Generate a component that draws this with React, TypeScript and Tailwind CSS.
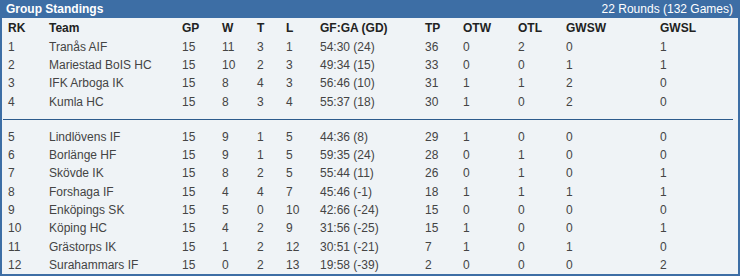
import React from 'react';

type Row = (string | number)[];

const top: Row[] = [
  [1, 'Tranås AIF', 15, 11, 3, 1, '54:30 (24)', 36, 0, 2, 0, 1],
  [2, 'Mariestad BoIS HC', 15, 10, 2, 3, '49:34 (15)', 33, 0, 0, 1, 1],
  [3, 'IFK Arboga IK', 15, 8, 4, 3, '56:46 (10)', 31, 1, 1, 2, 0],
  [4, 'Kumla HC', 15, 8, 3, 4, '55:37 (18)', 30, 1, 0, 2, 0],
];

const bottom: Row[] = [
  [5, 'Lindlövens IF', 15, 9, 1, 5, '44:36 (8)', 29, 1, 0, 0, 0],
  [6, 'Borlänge HF', 15, 9, 1, 5, '59:35 (24)', 28, 0, 1, 0, 0],
  [7, 'Skövde IK', 15, 8, 2, 5, '55:44 (11)', 26, 0, 1, 0, 1],
  [8, 'Forshaga IF', 15, 4, 4, 7, '45:46 (-1)', 18, 1, 1, 1, 1],
  [9, 'Enköpings SK', 15, 5, 0, 10, '42:66 (-24)', 15, 0, 0, 0, 0],
  [10, 'Köping HC', 15, 4, 2, 9, '31:56 (-25)', 15, 1, 0, 0, 1],
  [11, 'Grästorps IK', 15, 1, 2, 12, '30:51 (-21)', 7, 1, 0, 1, 0],
  [12, 'Surahammars IF', 15, 0, 2, 13, '19:58 (-39)', 2, 0, 0, 0, 2],
];

const headers = ['RK', 'Team', 'GP', 'W', 'T', 'L', 'GF:GA (GD)', 'TP', 'OTW', 'OTL', 'GWSW', 'GWSL'];

const cols = 'grid grid-cols-[41px_133px_40px_35px_29px_34px_105px_38px_55px_48px_94px_1fr]';

const TableRow = ({ cells, head }: { cells: Row; head?: boolean }) => (
  <div className={`${cols} items-center ${head ? 'h-[19px] font-bold text-[#222]' : 'h-[18.33px] text-[#444]'}`}>
    {cells.map((c, i) => (
      <div key={i} className="whitespace-nowrap leading-none">{c}</div>
    ))}
  </div>
);

export default function App() {
  return (
    <div className="w-[740px] h-[276px] bg-[#eff3f6] border-2 border-t-0 border-[#3d6ea5] text-[12px] font-['Liberation_Sans',Arial,sans-serif] flex flex-col">
      <div className="h-[18px] bg-[#3d6ea5] text-white flex items-center justify-between px-1 shrink-0">
        <span className="font-bold">Group Standings</span>
        <span className="pr-[1px]">22 Rounds (132 Games)</span>
      </div>
      <div className="pl-[6px] pt-[0.5px]">
        <TableRow cells={headers} head />
        {top.map((r) => (
          <TableRow key={r[0]} cells={r} />
        ))}
      </div>
      <div className="h-[18.33px] flex items-center pl-[1px] pr-[5px]">
        <div className="h-px w-full bg-[#2d5b8c]" />
      </div>
      <div className="pl-[6px]">
        {bottom.map((r) => (
          <TableRow key={r[0]} cells={r} />
        ))}
      </div>
    </div>
  );
}
